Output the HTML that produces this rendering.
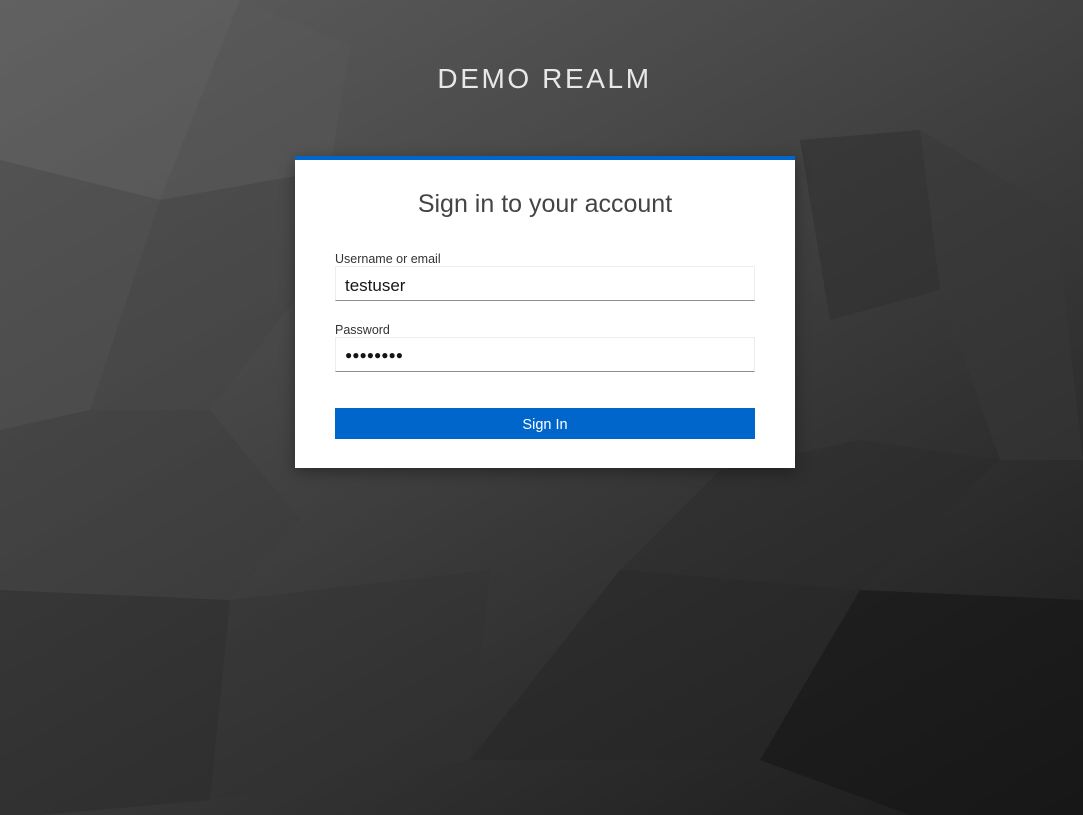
<!DOCTYPE html>
<html><head><meta charset="utf-8"><style>
html,body{margin:0;width:1083px;height:815px;overflow:hidden;font-family:"Liberation Sans",sans-serif}
body{background:linear-gradient(150deg,#5e5e5e 0%,#484848 35%,#333 65%,#1a1a1a 100%);position:relative}
svg.bg{position:absolute;left:0;top:0}
.title{position:absolute;top:63px;left:0;width:1089px;text-align:center;color:#e8e8e8;font-size:28px;letter-spacing:2.6px;font-weight:300}
.card{position:absolute;left:295px;top:156px;width:500px;height:312px;background:#fff;border-top:4px solid #0066cc;box-sizing:border-box;box-shadow:0 4px 14px rgba(0,0,0,.35)}
h1{margin:0;position:absolute;top:30px;width:100%;text-align:center;font-size:25px;font-weight:300;color:#444}
.lbl{position:absolute;left:40px;font-size:12.5px;color:#333}
.inp{position:absolute;left:40px;width:420px;height:35px;box-sizing:border-box;border:1px solid #ededed;border-bottom:1px solid #8a8d90;font-size:17px;color:#151515;padding:9px 0 0 9px}
.btn{position:absolute;left:40px;top:248px;width:420px;height:31px;background:#0066cc;color:#fff;text-align:center;line-height:34px;font-size:14.5px}
</style></head><body>
<svg class="bg" width="1083" height="815">
<polygon points="0,0 240,0 160,200 0,160" fill="#666" opacity=".35"/>
<polygon points="240,0 350,45 330,170 160,200" fill="#5a5a5a" opacity=".4"/>
<polygon points="0,160 160,200 90,410 0,430" fill="#4e4e4e" opacity=".5"/>
<polygon points="160,200 330,170 295,300 210,410 90,410" fill="#444" opacity=".4"/>
<polygon points="800,140 920,130 940,290 830,320" fill="#2e2e2e" opacity=".5"/>
<polygon points="920,130 1055,210 1083,460 1000,460 940,290" fill="#373737" opacity=".5"/>
<polygon points="0,590 230,600 210,800 40,815 0,815" fill="#2a2a2a" opacity=".5"/>
<polygon points="230,600 490,570 470,760 210,800" fill="#333" opacity=".4"/>
<polygon points="620,570 860,590 760,760 470,760" fill="#262626" opacity=".5"/>
<polygon points="860,590 1083,600 1083,815 910,815 760,760" fill="#161616" opacity=".6"/>
<polygon points="720,470 860,440 1000,460 860,590 620,570" fill="#2b2b2b" opacity=".4"/>
<polygon points="0,430 90,410 210,410 300,520 230,600 0,590" fill="#3c3c3c" opacity=".4"/>
</svg>
<div class="title">DEMO REALM</div>
<div class="card">
<h1>Sign in to your account</h1>
<div class="lbl" style="top:92px">Username or email</div>
<div class="inp" style="top:106px">testuser</div>
<div class="lbl" style="top:163px">Password</div>
<div class="inp" style="top:177px;font-size:12px;padding-top:10px;letter-spacing:0">●●●●●●●●</div>
<div class="btn">Sign In</div>
</div>
</body></html>
